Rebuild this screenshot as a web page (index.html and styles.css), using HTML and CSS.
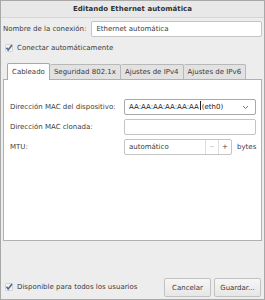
FILE: index.html
```html
<!DOCTYPE html>
<html lang="es">
<head>
    <meta charset="UTF-8">
    <title>Editando Ethernet automática</title>
    <link rel="stylesheet" href="styles.css">
</head>
<body>
    <div class="window">
        <div class="titlebar">Editando Ethernet automática</div>
        <div class="content">
            <div class="name-row">
                <span class="label">Nombre de la conexión:</span>
                <div class="entry">Ethernet automática</div>
            </div>
            <div class="check-row">
                <svg class="check" width="8" height="8" viewBox="0 0 8 8">
                    <rect x="0.5" y="0.5" width="7" height="7" rx="1" fill="#f4f4f4" stroke="#d0d0d0"/>
                    <path d="M1.5 3.8 L3.2 6 L7 1" fill="none" stroke="#4d6b96" stroke-width="1.6"/>
                </svg>
                <span>Conectar automáticamente</span>
            </div>
            <div class="notebook">
                <ul class="tabs">
                    <li class="tab active">Cableado</li>
                    <li class="tab">Seguridad 802.1x</li>
                    <li class="tab">Ajustes de IPv4</li>
                    <li class="tab">Ajustes de IPv6</li>
                </ul>
                <div class="panel">
                    <div class="form">
                        <span class="label">Dirección MAC del dispositivo:</span>
                        <div class="entry combo">
                            <span class="combo-text">AA:AA:AA:AA:AA:AA<i class="caret"></i>(eth0)</span>
                            <svg class="chevron" width="7" height="5" viewBox="0 0 7 5">
                                <path d="M1 1 L3.5 3.5 L6 1" fill="none" stroke="#777" stroke-width="1"/>
                            </svg>
                        </div>
                        <span class="label">Dirección MAC clonada:</span>
                        <div class="entry"></div>
                        <span class="label">MTU:</span>
                        <div class="spin-row">
                            <div class="entry spin">
                                <span class="spin-text">automático</span>
                                <span class="spin-btn minus">−</span>
                                <span class="spin-btn">+</span>
                            </div>
                            <span>bytes</span>
                        </div>
                    </div>
                </div>
            </div>
        </div>
        <div class="footer">
            <div class="check-row">
                <svg class="check" width="8" height="8" viewBox="0 0 8 8">
                    <rect x="0.5" y="0.5" width="7" height="7" rx="1" fill="#f4f4f4" stroke="#d0d0d0"/>
                    <path d="M1.5 3.8 L3.2 6 L7 1" fill="none" stroke="#4d6b96" stroke-width="1.6"/>
                </svg>
                <span>Disponible para todos los usuarios</span>
            </div>
            <div class="buttons">
                <button class="btn">Cancelar</button>
                <button class="btn">Guardar...</button>
            </div>
        </div>
    </div>
</body>
</html>
```

FILE: styles.css
```css
*{
    margin: 0;
    padding: 0;
    box-sizing: border-box;
}
body{
    font-family: "DejaVu Sans", sans-serif;
    font-size: 7px;
    color: #3a3c3e;
    background: #fff;
}
li{
    list-style: none;
}
.window{
    width: 265px;
    height: 300px;
    border: 1px solid #a8a8a8;
    background: #ededed;
    display: flex;
    flex-direction: column;
}
.titlebar{
    height: 17px;
    line-height: 16px;
    text-align: center;
    font-weight: bold;
    color: #2e3436;
    border-bottom: 1px solid #d6d6d6;
    background: #e8e8e8;
}
.content{
    padding: 3px 2px 0 2px;
    display: flex;
    flex-direction: column;
    flex: 1;
}
.name-row{
    display: flex;
    align-items: center;
    gap: 5px;
}
.entry{
    height: 16px;
    line-height: 14px;
    border: 1px solid #c4c4c4;
    border-radius: 2px;
    background: #fff;
    padding: 0 4px;
}
.name-row .entry{
    flex: 1;
}
.check-row{
    display: flex;
    align-items: center;
    gap: 4px;
    height: 16px;
    margin: 3px 0 0 2px;
}
.check{
    display: block;
}
.notebook{
    margin-top: 6px;
    display: flex;
    flex-direction: column;
    flex: 1;
}
.tabs{
    display: flex;
    align-items: flex-end;
    padding-left: 4px;
    height: 17px;
}
.tab{
    height: 15px;
    line-height: 14px;
    padding: 0 4px;
    background: #e2e2e2;
    border: 1px solid #b8b8b8;
    border-bottom: none;
    border-left: none;
    border-radius: 2px 2px 0 0;
    color: #3a3a3a;
}
.tab.active{
    height: 17px;
    line-height: 17px;
    background: #fff;
    border-left: 1px solid #b8b8b8;
    border-color: #a8a8a8;
    margin-bottom: -1px;
    position: relative;
}
.panel{
    flex: 1;
    background: #fff;
    border: 1px solid #b0b0b0;
    padding: 19px 6px 0 6px;
    margin-bottom: 1px;
}
.form{
    display: grid;
    grid-template-columns: 114px 1fr;
    align-items: center;
    row-gap: 4px;
}
.combo{
    display: flex;
    align-items: center;
    justify-content: space-between;
    border-color: #a8a8a8;
}
.combo-text{
    color: #1a1a1a;
}
.caret{
    display: inline-block;
    width: 1px;
    height: 9px;
    background: #222;
    vertical-align: -1px;
    margin: 0 1px;
}
.chevron{
    margin-right: 2px;
}
.spin-row{
    display: flex;
    align-items: center;
    gap: 5px;
}
.spin{
    display: flex;
    align-items: stretch;
    padding-right: 0;
    width: 108px;
}
.spin-text{
    flex: 1;
}
.spin-btn{
    width: 13px;
    text-align: center;
    border-left: 1px solid #dedede;
    color: #444;
}
.spin-btn.minus{
    color: #bbb;
}
.footer{
    height: 57px;
    display: flex;
    align-items: flex-end;
    justify-content: space-between;
    padding: 0 3px 2px 2px;
}
.footer .check-row{
    margin-bottom: 2px;
}
.buttons{
    display: flex;
    gap: 3px;
}
.btn{
    font-family: "DejaVu Sans", sans-serif;
    font-size: 7px;
    color: #3a3c3e;
    height: 19px;
    width: 47px;
    background: linear-gradient(#f6f6f6, #e6e6e6);
    border: 1px solid #c2c2c2;
    border-radius: 2px;
}
```
